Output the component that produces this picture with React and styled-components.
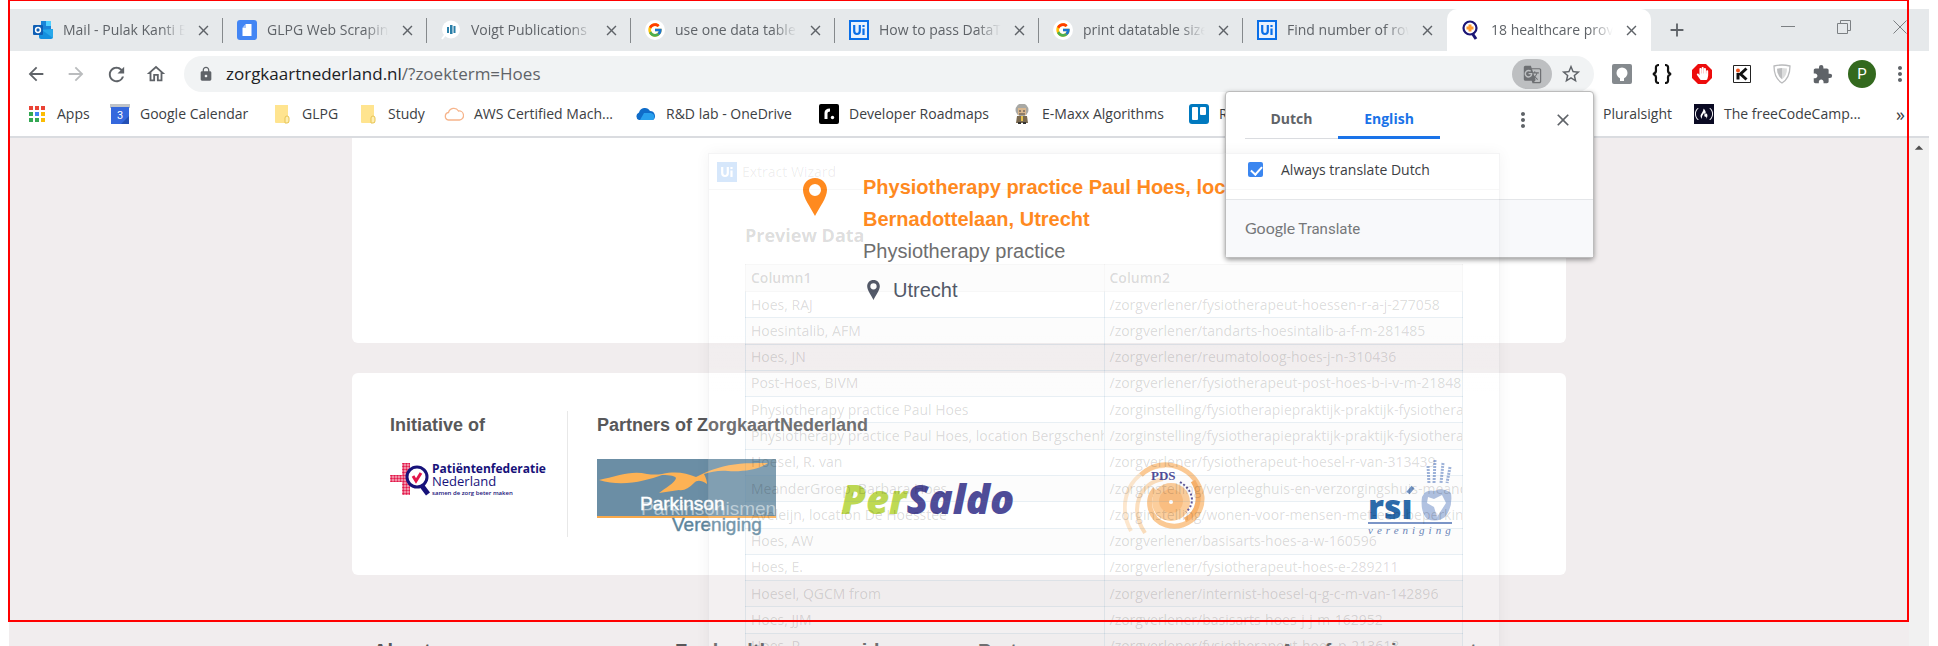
import React from 'react';
import styled, { createGlobalStyle, css } from 'styled-components';
import { MdArrowBack, MdArrowForward, MdRefresh, MdOutlineHome, MdLock, MdGTranslate, MdStarBorder, MdExtension, MdClose, MdAdd, MdMoreVert, MdArrowDropUp } from 'react-icons/md';
import { FcGoogle } from 'react-icons/fc';
import { FaHandPaper } from 'react-icons/fa';
import { SiFreecodecamp } from 'react-icons/si';

const ui = '"Open Sans", "Noto Sans", sans-serif';
const arial = '"Liberation Sans", Arial, sans-serif';

const Global = createGlobalStyle`
  * { box-sizing: border-box; }
  body { margin: 0; background: #fff; font-family: ${ui}; }
  button { border: 0; padding: 0; background: none; color: inherit; font: inherit; }
  svg { display: block; flex: none; }
  h2, h3, p { margin: 0; }
`;

const Screen = styled.div`
  position: relative;
  height: 100vh;
  overflow: hidden;
  padding: 9px 9px 0;
  display: flex;
  flex-direction: column;
`;

const RedFrame = styled.div`
  position: absolute;
  z-index: 5;
  inset: 0 29px 24px 8px;
  border: 2px solid #f00;
  border-top-width: 1px;
  pointer-events: none;
`;

/* ---------- tab strip ---------- */
const TabStrip = styled.div`
  display: flex;
  flex: none;
  height: 42px;
  padding-left: 10px;
  background: #e6e9eb;
  color: #5f6368;
`;
const Tab = styled.div`
  display: flex;
  align-items: center;
  gap: 10px;
  flex: 0 1 204px;
  min-width: 0;
  padding: 0 12px 0 14px;
  position: relative;
  ${p => p.$active ? css`
    background: #fff;
    border-radius: 10px 10px 0 0;
  ` : css`
    &::after {
      content: '';
      position: absolute;
      right: 0;
      top: 9px;
      height: 25px;
      width: 1px;
      background: #85898c;
    }
  `}
  ${p => p.$beforeActive && css`&::after { display: none; }`}
`;
const TabTitle = styled.span`
  flex: 1;
  min-width: 0;
  overflow: hidden;
  white-space: nowrap;
  font-size: 14px;
  line-height: 20px;
  mask-image: linear-gradient(to right, #000 80%, transparent 100%);
`;
const IconButton = styled.button`
  display: flex;
  align-items: center;
  justify-content: center;
  flex: none;
  width: ${p => p.$w || 16}px;
  color: ${p => p.$color || '#5f6368'};
`;
const WindowControls = styled.div`
  display: flex;
  margin-left: auto;
  padding: 0 1px 6px 0;
`;

/* ---------- toolbar ---------- */
const Toolbar = styled.div`
  display: flex;
  align-items: center;
  flex: none;
  height: 46px;
  padding: 0 11px 0 7px;
`;
const NavButtons = styled.div`
  display: flex;
  width: 168px;
`;
const AddressBar = styled.div`
  display: flex;
  align-items: center;
  flex: 1;
  height: 36px;
  padding: 0 10px 0 14px;
  border-radius: 18px;
  background: #f1f3f4;
  color: #5f6368;
`;
const Url = styled.div`
  flex: 1;
  padding-left: 12px;
  font-size: 17px;
  line-height: 24px;
  white-space: nowrap;
  b { font-weight: 400; color: #202124; }
`;
const TranslatePill = styled.button`
  display: flex;
  align-items: center;
  justify-content: center;
  width: 40px;
  height: 30px;
  margin-right: 6px;
  border-radius: 15px;
  background: #bdbfc1;
  color: #6d6f72;
`;
const Extensions = styled.div`
  display: flex;
  align-items: center;
  padding-left: 8px;
`;
const Avatar = styled.span`
  width: 28px;
  height: 28px;
  border-radius: 50%;
  background: #33691e;
  color: #fff;
  font: 15px/28px Roboto, sans-serif;
  text-align: center;
`;

/* ---------- bookmarks ---------- */
const BookmarkBar = styled.nav`
  display: flex;
  align-items: center;
  flex: none;
  height: 41px;
  padding: 0 24px 6px 18px;
  border-bottom: 2px solid #dadce0;
  font-size: 14px;
  line-height: 20px;
`;
const Bookmark = styled.a`
  display: flex;
  align-items: center;
  gap: 10px;
  flex: 0 1 ${p => p.$w}px;
  min-width: 0;
  color: #3c4043;
  text-decoration: none;
  white-space: nowrap;
`;
const More = styled.button`
  margin-left: auto;
  color: #3c4043;
  font-size: 18px;
`;

/* ---------- page ---------- */
const Viewport = styled.div`
  display: flex;
  flex: 1;
  min-height: 0;
`;
const Page = styled.main`
  flex: 1;
  min-width: 0;
  overflow: hidden;
  background: #f1edee;
  font-family: ${arial};
`;
const Scrollbar = styled.div`
  width: 20px;
  background: #f1f1f1;
  color: #505050;
`;
const Column = styled.div`
  max-width: 1214px;
  margin: 0 auto;
`;
const ResultCard = styled.section`
  display: flex;
  align-items: flex-start;
  gap: 36px;
  min-height: 205px;
  padding: 33px 37px 0 451px;
  border-radius: 0 0 6px 6px;
  background: #fff;
  & > svg { margin-top: 7px; }
`;
const ResultText = styled.div`
  width: 420px;
  font-size: 20px;
  line-height: 32px;
  color: #6e6e6e;
`;
const ResultLink = styled.a`
  display: block;
  color: #ff8a1f;
  font-weight: 700;
  text-decoration: none;
`;
const Place = styled.p`
  display: flex;
  align-items: center;
  gap: 13px;
  padding: 7px 0 0 4px;
  color: #535a69;
`;
const PartnersCard = styled.section`
  display: flex;
  min-height: 200px;
  margin-top: 30px;
  padding: 38px 27px 38px 38px;
  border-radius: 6px;
  background: #fff;
`;
const Initiative = styled.div`
  width: 178px;
  border-right: 1px solid #e8e8e8;
`;
const Partners = styled.div`
  flex: 1;
  padding-left: 29px;
`;
const Heading = styled.h3`
  font-size: 18px;
  line-height: 28px;
  color: #58585a;
  white-space: nowrap;
`;
const Logos = styled.div`
  display: grid;
  grid-template-columns: repeat(${p => p.$count}, 180px);
  gap: 61px;
  justify-items: ${p => (p.$count > 1 ? 'center' : 'start')};
  padding-top: 20px;
`;
const Footer = styled.footer`
  display: grid;
  grid-template-columns: 302px 303px 302px 1fr;
  padding: 64px 0 0 21px;
  font-size: 20px;
  font-weight: 700;
  line-height: 24px;
  color: #58585a;
  white-space: nowrap;
`;

/* ---------- translate popover ---------- */
const Popover = styled.aside`
  position: absolute;
  z-index: 2;
  top: 91px;
  right: 344px;
  width: 369px;
  border: 1px solid #bcbcbc;
  border-radius: 4px;
  background: #fff;
  box-shadow: 0 2px 5px rgba(0, 0, 0, .4);
`;
const LanguageRow = styled.div`
  display: flex;
  align-items: center;
  padding: 9px 10px 0 19px;
`;
const Languages = styled.div`
  display: flex;
  margin-right: auto;
  border-bottom: 1px solid #dadce0;
`;
const Language = styled.button`
  width: ${p => p.$on ? 102 : 93}px;
  height: 38px;
  margin-bottom: -1px;
  border-bottom: ${p => p.$on ? '3px solid #1a73e8' : '3px solid transparent'};
  color: ${p => p.$on ? '#1a73e8' : '#5f6368'};
  font-size: 14px;
  font-weight: 700;
`;
const Always = styled.label`
  display: flex;
  align-items: center;
  gap: 18px;
  height: 60px;
  padding-left: 22px;
  color: #3c4043;
  font-size: 14px;
`;
const Check = styled.input`
  appearance: none;
  width: 15px;
  height: 15px;
  margin: 0;
  border-radius: 2px;
  background: #3b86f0;
  position: relative;
  &::after {
    content: '';
    position: absolute;
    left: 5px;
    top: 2px;
    width: 5px;
    height: 9px;
    border: solid #fff;
    border-width: 0 2px 2px 0;
    transform: rotate(42deg);
  }
`;
const PopoverFoot = styled.div`
  display: flex;
  align-items: baseline;
  gap: 3px;
  height: 58px;
  padding: 18px 0 0 19px;
  border-top: 1px solid #e4e6e9;
  background: #f8f9fb;
  color: #757779;
  font: 15px/20px Roboto, sans-serif;
  span { font-family: Lato, sans-serif; font-size: 16px; }
`;

/* ---------- fading wizard window ---------- */
const Wizard = styled.section`
  position: absolute;
  z-index: 3;
  top: 153px;
  left: 708px;
  width: 792px;
  border: 1px solid rgba(70, 70, 80, .06);
  background: linear-gradient(to bottom, transparent 180px, rgba(255, 255, 255, .15) 240px);
  box-shadow: 0 0 14px rgba(0, 0, 0, .05);
  pointer-events: none;
  font-size: 14px;
  color: rgba(0, 0, 0, .15);
`;
const WizardTitle = styled.header`
  display: flex;
  align-items: center;
  gap: 5px;
  height: 36px;
  padding-left: 8px;
  border-bottom: 1px solid rgba(0, 0, 0, .03);
  color: rgba(0, 0, 0, .08);
`;
const WizardBody = styled.div`
  padding: 33px 36px 0 36px;
`;
const WizardHeading = styled.h2`
  font-size: 18px;
  line-height: 24px;
`;
const DataTable = styled.table`
  width: 100%;
  height: 396px;
  margin-top: 17px;
  table-layout: fixed;
  border-collapse: collapse;
  white-space: nowrap;
  th, td {
    padding: 0 5px;
    overflow: hidden;
    text-align: left;
    line-height: 20px;
    border: 1px solid rgba(80, 130, 170, .13);
  }
  th { height: 27px; font-weight: 600; border-color: rgba(0, 0, 0, .03); }
  tbody tr:nth-child(even), thead tr { background: rgba(0, 0, 0, .01); }
`;

/* ---------- favicons ---------- */
const Svg = ({ s = 20, children, vb = '0 0 20 20' }) => <svg width={s} height={s} viewBox={vb}>{children}</svg>;
const Outlook = () => <Svg><path d="M8 1h10v9H8z" fill="#1a84d8" /><path d="M13 1h5v5h-5z" fill="#50d0ff" /><path d="M6 9h14v8q0 2-2 2H8q-2 0-2-2z" fill="#1490df" /><path d="M20 9v9L9 10z" fill="#28a8ea" /><rect y="5" width="10" height="10" rx="1" fill="#0f5fb5" /><circle cx="5" cy="10" r="2.4" fill="none" stroke="#fff" strokeWidth="1.5" /></Svg>;
const DocIcon = () => <Svg><rect width="20" height="20" rx="3" fill="#4285f4" /><path d="M9 4h5.500v12h-9V8z" fill="#fff" /><path d="M9 4v4H5.500" fill="#a9c6fa" /></Svg>;
const Voigt = () => <Svg><circle cx="10" cy="9.500" r="9" fill="#fff" /><path d="M4 15l-3 4" stroke="#fff" strokeWidth="2" /><path d="M6 7h2v6H6zM9 5h2.500v9H9zM12.500 6h2v7h-2z" fill="#2a7fa8" /></Svg>;
const GIcon = () => <Svg><circle cx="10" cy="10" r="10" fill="#fff" /><g transform="translate(2 2)"><FcGoogle size={16} /></g></Svg>;
const UiBox = ({ fill = '#e8f1fd', ink = '#0a6fe8' }) => <Svg><path d="M1 1h18v18H1z" fill={fill} stroke={fill === '#e8f1fd' ? ink : fill} strokeWidth="2" /><path d="M5.200 5v6q0 3 2.800 3t2.800-3V5M14.500 8.500V15" fill="none" stroke={ink} strokeWidth="2.200" /><path d="M13.400 5h2.200v2h-2.200z" fill={ink} /></Svg>;
const Zorg = () => <Svg><path d="M11 13l4 6" stroke="#1b1575" strokeWidth="3" /><circle cx="9" cy="8" r="6.500" fill="#fff" stroke="#1b1575" strokeWidth="2.200" /><path d="M9 4.500v7M5.500 8h7" stroke="#ff9a2f" strokeWidth="3" /></Svg>;
const Apps = () => <Svg>{['#ea4335', '#ea4335', '#ea4335', '#34a853', '#4285f4', '#fbbc04', '#34a853', '#34a853', '#fbbc04'].map((c, i) => <rect key={i} x={2 + (i % 3) * 6} y={2 + Math.floor(i / 3) * 6} width="4" height="4" fill={c} />)}</Svg>;
const Calendar = () => <Svg><path d="M0 0h20v4H0z" fill="#bfc3c8" /><path d="M1 3h18v17H1z" fill="#3568dd" /><path d="M11 20l8-8v8z" fill="#2450b5" /><text x="10" y="15" fontSize="11" fontFamily="Roboto" textAnchor="middle" fill="#fff">3</text></Svg>;
const Folder = () => <Svg><path d="M3 1h13v12h1v6H4q-1 0-1-1z" fill="#ffe48f" /><path d="M13 19v-5q0-2 2-2t2 2v3q0 2-2 2z" fill="#ffeeb0" stroke="#e7c455" /></Svg>;
const CloudOut = () => <Svg><path d="M4.500 16a3.800 3.800 0 0 1 0-7.500 5.500 5.500 0 0 1 10-1.500 4.500 4.500 0 0 1 1 9z" fill="none" stroke="#f6b48b" strokeWidth="1.300" /></Svg>;
const OneDrive = () => <Svg><path d="M3 16a4 4 0 0 1 0-7.500 6 6 0 0 1 11-1.500A5 5 0 0 1 17 16z" fill="#0f6cc9" /><path d="M8 9l7 0a4 4 0 0 1 2 7H4z" fill="#28a0ee" /></Svg>;
const Roadmap = () => <Svg><rect width="20" height="20" rx="2" fill="#000" /><path d="M7 15V9q0-3 4-3" stroke="#fff" strokeWidth="3" fill="none" /><circle cx="13.500" cy="13.500" r="1.700" fill="#fff" /></Svg>;
const Einstein = () => <Svg><circle cx="10" cy="6" r="6.500" fill="#a8a8a4" /><path d="M6 4h8v7H6z" fill="#d9b78f" /><path d="M7 7h2M11 7h2M7 10h6" stroke="#444" /><path d="M5 12h10l1 7H4z" fill="#7b6a50" /><path d="M9 12h2v5H9z" fill="#e8c24c" /><path d="M6 19h3M11 19h3" stroke="#333" strokeWidth="2" /></Svg>;
const Trello = () => <Svg><rect width="20" height="20" rx="3" fill="#0079bf" /><rect x="3" y="3" width="6" height="13" rx="1" fill="#fff" /><rect x="11" y="3" width="6" height="8" rx="1" fill="#fff" /></Svg>;
const Plural = () => <Svg><circle cx="10" cy="10" r="10" fill="#f15b5b" /></Svg>;
const Fcc = () => <Svg><rect width="20" height="20" fill="#0a0a23" /><g transform="translate(1 1)" color="#fff"><SiFreecodecamp size={18} /></g></Svg>;

const Pin = ({ w, h, color }) => <svg width={w} height={h} viewBox="0 0 24 38"><path fillRule="evenodd" fill={color} d="M12 0C5 0 0 5 0 12c0 8 8 18 12 26 4-8 12-18 12-26C24 5 19 0 12 0zm0 6a6 6 0 1 1 0 12 6 6 0 0 1 0-12z" /></svg>;

/* ---------- partner logos ---------- */
const PatientLogo = () => (
  <svg width="162" height="38" viewBox="0 0 162 38">
    <defs><pattern id="dots" width="3" height="3" patternUnits="userSpaceOnUse"><rect width="3" height="3" fill="#f6b6c3" /><circle cx="1.500" cy="1.500" r="1.200" fill="#e3174b" /></pattern></defs>
    <path d="M12 4h8v32h-8zM0 16h22v7H0z" fill="url(#dots)" />
    <path d="M32 27l6 8" stroke="#17127a" strokeWidth="5" />
    <circle cx="27" cy="18" r="10" fill="#fff" stroke="#17127a" strokeWidth="3" />
    <path d="M23 17l3 5 5-8" fill="none" stroke="#e3174b" strokeWidth="3" />
    <g fill="#17127a" fontFamily="Open Sans">
      <text x="42" y="14" fontSize="12" fontWeight="700">Patiëntenfederatie</text>
      <text x="42" y="27" fontSize="13">Nederland</text>
      <text x="42" y="36" fontSize="6" fontWeight="600">samen de zorg beter maken</text>
    </g>
  </svg>
);
const ParkinsonLogo = () => (
  <svg width="180" height="78" viewBox="0 0 180 78">
    <path d="M0 0h179v57H0z" fill="#6b8ea5" />
    <path d="M0 57h179v2H0z" fill="#f9a94b" />
    <path d="M2 21C20 17 35 11 50 15q8 1 15 0c14-3 24-1 34 3 8-4 14-7 22-9 15-5 32-5 50-5-8 6-24 9-40 8-9-1-17 1-24 3 2 4 3 7 3 10-6-4-10-4-13-1-5 5-10 8-15 7l-20 3c6-5 16-10 17-15-1-2-5-3-14-3-16 6-40 12-63 5z" fill="#fdb255" />
    <g fontFamily="Liberation Sans" fontSize="19">
      <text x="44" y="56" fill="#b2c5d0">Parkinsonismen</text>
      <text x="43" y="51" fill="#fff" stroke="#fff" strokeWidth=".4">Parkinson</text>
      <text x="75" y="72" fill="#5d859c" stroke="#5d859c" strokeWidth=".4">Vereniging</text>
    </g>
  </svg>
);
const PerSaldoLogo = () => (
  <svg width="174" height="78" viewBox="0 0 174 78">
    <text x="0" y="55" fontFamily="Open Sans" fontWeight="800" fontStyle="italic" fontSize="40"><tspan fill="#b4d335">Per</tspan><tspan fill="#302d87">Saldo</tspan></text>
  </svg>
);
const PdsLogo = () => (
  <svg width="92" height="78" viewBox="0 0 92 78">
    <g fill="none" stroke="#fac081">
      <path d="M8 72C-8 44 8 8 42 7" strokeWidth="4" opacity=".45" />
      <path d="M22 74C6 50 16 24 40 20" strokeWidth="4" opacity=".6" />
      <path d="M18 16C40-6 76 10 79 38c1 20-18 33-36 28C26 61 22 40 32 30" strokeWidth="5" />
      <path d="M70 22c9 14 6 32-8 39" strokeWidth="5" stroke="#f7a552" />
    </g>
    <circle cx="48" cy="43" r="19" fill="#fbc58b" /><circle cx="48" cy="42" r="12" fill="#f9b36b" /><circle cx="48" cy="43" r="2" fill="#fff" />
    <path d="M57 23c13 8 16 21 6 30" fill="none" stroke="#433b8c" strokeWidth="2" strokeDasharray="2 2" />
    <text x="28" y="21" fontFamily="Liberation Serif" fontWeight="700" fontSize="13" fill="#302d87">PDS</text>
  </svg>
);
const RsiLogo = () => (
  <svg width="84" height="78" viewBox="0 0 84 78">
    <g fill="none" stroke="#8ca5d2" strokeWidth="3" strokeDasharray="2 1"><path d="M60 7l1 18M67 1l-1 23M75 4l-2 20M82 8l-3 16" /></g>
    <path d="M54 38q4-8 12-6 10-4 17 2 2 14-6 24-8 6-18 2-7-8-5-22z" fill="#a3b7dc" />
    <path d="M60 38l6 2 8-4 4 8-9 14-3-10-7-4z" fill="#fff" />
    <path d="M40 34l5-6" stroke="#5c82bd" strokeWidth="4" />
    <text x="0" y="60" fontFamily="Open Sans" fontWeight="800" fontSize="34" fill="#06509b">rsı</text>
    <path d="M0 64h84" stroke="#6482bd" strokeWidth="2" />
    <text x="0" y="75" fontFamily="Liberation Serif" fontStyle="italic" fontSize="11" letterSpacing="4" fill="#5070ad">vereniging</text>
  </svg>
);

const tabs = [
  [Outlook, 'Mail - Pulak Kanti Bhowmick'], [DocIcon, 'GLPG Web Scraping'], [Voigt, 'Voigt Publications'],
  [GIcon, 'use one data table in'], [UiBox, 'How to pass DataTable'], [GIcon, 'print datatable size ui'],
  [UiBox, 'Find number of rows'], [Zorg, '18 healthcare providers'],
];
const bookmarks = [
  [Apps, 'Apps', 83], [Calendar, 'Google Calendar', 162], [Folder, 'GLPG', 86], [Folder, 'Study', 86],
  [CloudOut, 'AWS Certified Mach...', 192], [OneDrive, 'R&D lab - OneDrive', 183], [Roadmap, 'Developer Roadmaps', 193],
  [Einstein, 'E-Maxx Algorithms', 177], [Trello, 'R', 384], [Plural, 'Pluralsight', 121], [Fcc, 'The freeCodeCamp...', 180],
];
const rows = [
  ['Hoes, RAJ', '/zorgverlener/fysiotherapeut-hoessen-r-a-j-277058'],
  ['Hoesintalib, AFM', '/zorgverlener/tandarts-hoesintalib-a-f-m-281485'],
  ['Hoes, JN', '/zorgverlener/reumatoloog-hoes-j-n-310436'],
  ['Post-Hoes, BIVM', '/zorgverlener/fysiotherapeut-post-hoes-b-i-v-m-218489'],
  ['Physiotherapy practice Paul Hoes', '/zorginstelling/fysiotherapiepraktijk-praktijk-fysiotherapie'],
  ['Physiotherapy practice Paul Hoes, location Bergschenhoek', '/zorginstelling/fysiotherapiepraktijk-praktijk-fysiotherapie'],
  ['Hoesel, R. van', '/zorgverlener/fysiotherapeut-hoesel-r-van-313439'],
  ['MeanderGroep, Barbara Hoes', '/zorginstelling/verpleeghuis-en-verzorgingshuis-meander'],
  ['Aveleijn, location De Hoesstee', '/zorginstelling/wonen-voor-mensen-met-een-beperking'],
  ['Hoes, AW', '/zorgverlener/basisarts-hoes-a-w-160596'],
  ['Hoes, E.', '/zorgverlener/fysiotherapeut-hoes-e-289211'],
  ['Hoesel, QGCM from', '/zorgverlener/internist-hoesel-q-g-c-m-van-142896'],
  ['Hoes, JJM', '/zorgverlener/basisarts-hoes-j-j-m-162952'],
  ['Hoes, P.', '/zorgverlener/fysiotherapeut-hoes-p-213618'],
];

export default function App() {
  return (
    <Screen>
      <Global />
      <TabStrip>
        {tabs.map(([Icon, title], i) => (
          <Tab key={title} $active={i === 7} $beforeActive={i === 6}>
            <Icon />
            <TabTitle>{title}</TabTitle>
            <IconButton aria-label="Close tab"><MdClose size={17} /></IconButton>
          </Tab>
        ))}
        <IconButton $w={52} aria-label="New tab"><MdAdd size={22} /></IconButton>
        <WindowControls>
          <IconButton $w={56} $color="#7c8083" aria-label="Minimize"><Svg s={14} vb="0 0 14 14"><path d="M0 6.500h14" stroke="currentColor" /></Svg></IconButton>
          <IconButton $w={56} $color="#7c8083" aria-label="Restore"><Svg s={14} vb="0 0 14 14"><path d="M.5 3.500h10v10H.5zM3.500 3.500v-3h10v10h-3" fill="none" stroke="currentColor" /></Svg></IconButton>
          <IconButton $w={56} $color="#7c8083" aria-label="Close"><Svg s={14} vb="0 0 14 14"><path d="M.5.5l13 13M13.500.5l-13 13" stroke="currentColor" /></Svg></IconButton>
        </WindowControls>
      </TabStrip>

      <Toolbar>
        <NavButtons>
          <IconButton $w={40} aria-label="Back"><MdArrowBack size={22} /></IconButton>
          <IconButton $w={40} $color="#babcbe" aria-label="Forward"><MdArrowForward size={22} /></IconButton>
          <IconButton $w={40} aria-label="Reload"><MdRefresh size={23} /></IconButton>
          <IconButton $w={40} aria-label="Home"><MdOutlineHome size={22} /></IconButton>
        </NavButtons>
        <AddressBar>
          <MdLock size={16} />
          <Url><b>zorgkaartnederland.nl</b>/?zoekterm=Hoes</Url>
          <TranslatePill aria-label="Translate this page"><MdGTranslate size={19} /></TranslatePill>
          <IconButton $w={26} aria-label="Bookmark"><MdStarBorder size={22} /></IconButton>
        </AddressBar>
        <Extensions>
          <IconButton $w={40} aria-label="Lamp"><Svg><rect width="20" height="20" rx="2" fill="#858a8e" /><circle cx="10" cy="9" r="5.500" fill="#fff" /><path d="M8 13h4v4H8z" fill="#fff" /></Svg></IconButton>
          <IconButton $w={40} $color="#111" aria-label="JSON"><Svg><path d="M7 1C3 1 4 4 4 6.500S3 9.500 1 10c2 .5 3 1 3 3.500S3 19 7 19M13 1c4 0 3 3 3 5.500s1 3 3 3.500c-2 .5-3 1-3 3.500s1 5.500-3 5.500" fill="none" stroke="currentColor" strokeWidth="2.200" /></Svg></IconButton>
          <IconButton $w={40} $color="#fff" aria-label="Ad blocker"><Svg><path d="M6 0h8l6 6v8l-6 6H6l-6-6V6z" fill="#ed0c0c" /><g transform="translate(4 3)"><FaHandPaper size={13} /></g></Svg></IconButton>
          <IconButton $w={40} aria-label="K"><Svg><path d="M1.500 1.500h17v17h-17z" fill="#fff" stroke="#222" /><circle cx="6" cy="6.500" r="2" fill="#f0531c" /><path d="M6 9v6.500M14.500 4.500L8.500 10l6 5.500" fill="none" stroke="#111" strokeWidth="3" /></Svg></IconButton>
          <IconButton $w={40} aria-label="Shield"><Svg><path d="M2 2q8-2 16 0 0 12-8 17Q2 14 2 2z" fill="#fff" stroke="#b9babc" strokeWidth="1.300" /><path d="M5 4.500q5-1 10 0 0 7-5 11-5-4-5-11z" fill="#dcdddd" /><path d="M10 4v11q-5-4-5-10z" fill="#bcbdbf" /></Svg></IconButton>
          <IconButton $w={40} aria-label="Extensions"><MdExtension size={21} /></IconButton>
          <IconButton $w={40} aria-label="Profile"><Avatar>P</Avatar></IconButton>
          <IconButton $w={36} aria-label="Menu"><MdMoreVert size={24} /></IconButton>
        </Extensions>
      </Toolbar>

      <BookmarkBar>
        {bookmarks.map(([Icon, title, w], i) => <Bookmark key={i} href="#" $w={w}><Icon />{title}</Bookmark>)}
        <More aria-label="More bookmarks">»</More>
      </BookmarkBar>

      <Viewport>
        <Page>
          <Column>
            <ResultCard>
              <Pin w={24} h={38} color="#ff8a1f" />
              <ResultText>
                <ResultLink href="#">Physiotherapy practice Paul Hoes, location Bernadottelaan, Utrecht</ResultLink>
                <p>Physiotherapy practice</p>
                <Place><Pin w={13} h={20} color="#535a69" />Utrecht</Place>
              </ResultText>
            </ResultCard>
            <PartnersCard>
              <Initiative>
                <Heading>Initiative of</Heading>
                <Logos $count={1}><PatientLogo /></Logos>
              </Initiative>
              <Partners>
                <Heading>Partners of ZorgkaartNederland</Heading>
                <Logos $count={4}><ParkinsonLogo /><PerSaldoLogo /><PdsLogo /><RsiLogo /></Logos>
              </Partners>
            </PartnersCard>
            <Footer>
              <span>About</span><span>For healthcare providers</span><span>Partners</span><span>App for environment</span>
            </Footer>
          </Column>
        </Page>
        <Scrollbar><MdArrowDropUp size={20} /></Scrollbar>
      </Viewport>

      <Popover>
        <LanguageRow>
          <Languages><Language>Dutch</Language><Language $on>English</Language></Languages>
          <IconButton $w={40} aria-label="Options"><MdMoreVert size={24} /></IconButton>
          <IconButton $w={40} aria-label="Close translation"><MdClose size={20} /></IconButton>
        </LanguageRow>
        <Always><Check type="checkbox" defaultChecked />Always translate Dutch</Always>
        <PopoverFoot><span>Google</span>Translate</PopoverFoot>
      </Popover>

      <Wizard>
        <WizardTitle><UiBox fill="#d6e7fb" ink="#fff" />Extract Wizard</WizardTitle>
        <WizardBody>
          <WizardHeading>Preview Data</WizardHeading>
          <DataTable>
            <thead><tr><th>Column1</th><th>Column2</th></tr></thead>
            <tbody>{rows.map(([a, b], i) => <tr key={i}><td>{a}</td><td>{b}</td></tr>)}</tbody>
          </DataTable>
        </WizardBody>
      </Wizard>
      <RedFrame />
    </Screen>
  );
}
